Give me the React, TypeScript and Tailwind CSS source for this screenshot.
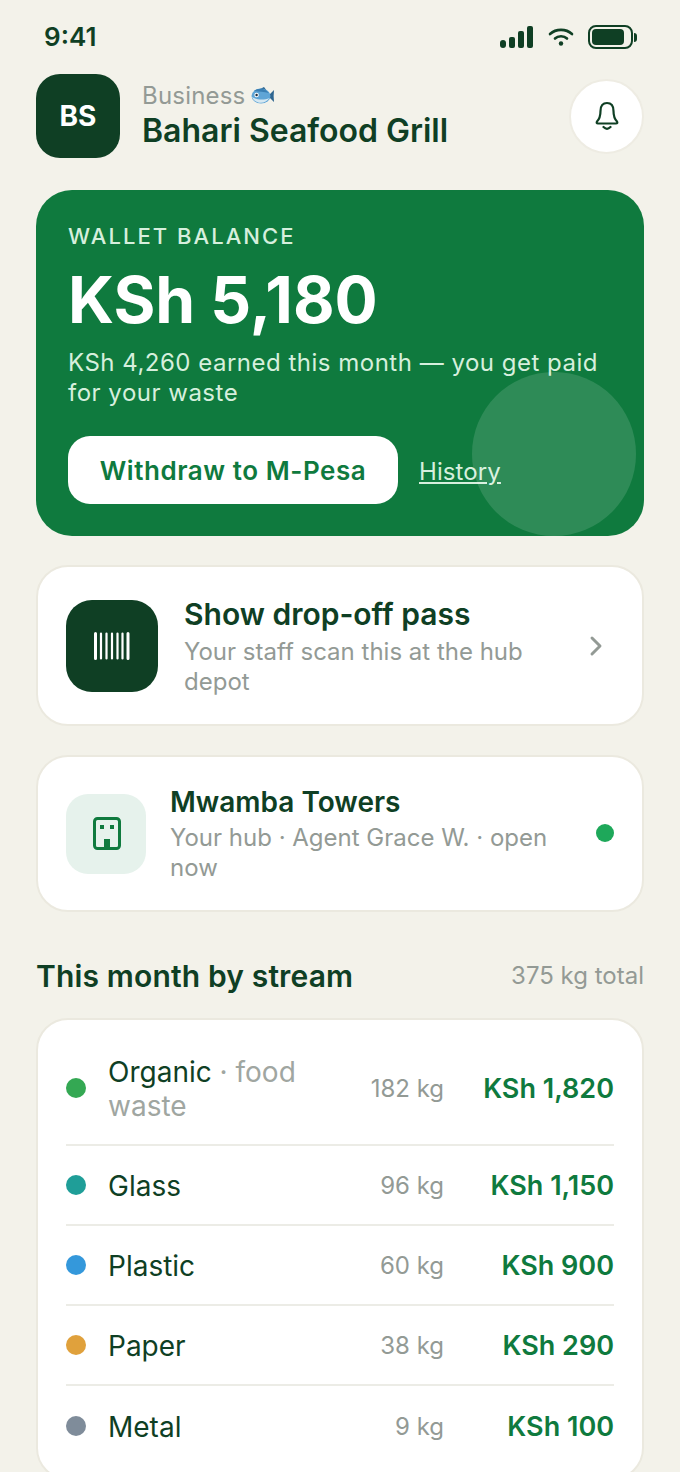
import { ChevronRight } from 'lucide-react';

const streams = [
  { name: 'Glass', kg: '96 kg', pay: 'KSh 1,150', dot: 'bg-[#1f9e98]' },
  { name: 'Plastic', kg: '60 kg', pay: 'KSh 900', dot: 'bg-[#3498db]' },
  { name: 'Paper', kg: '38 kg', pay: 'KSh 290', dot: 'bg-[#e0a13c]' },
  { name: 'Metal', kg: '9 kg', pay: 'KSh 100', dot: 'bg-[#7f8c9a]' },
];

const FishIcon = () => (
  <svg width="24" height="22" viewBox="0 0 24 22">
    <path d="M17 11 L23 5 C22.5 9 22.5 13 23 17 Z" fill="#2f6690" />
    <path d="M7 5 L13 2 L16 6 Z" fill="#2f6690" />
    <ellipse cx="10" cy="11" rx="9.5" ry="7.5" fill="#5fa5d6" />
    <path d="M3 6 C7 2.5 14 3 18 8 C13 6.5 8 7 3 6 Z" fill="#3a7fb3" />
    <path d="M1 12 C4 19 14 20 18.5 13 C13 15.5 6 15 1 12 Z" fill="#d5e8f2" />
    <circle cx="5.6" cy="10" r="2.2" fill="#fff" />
    <circle cx="5.6" cy="10" r="1.2" fill="#1c2c3a" />
  </svg>
);

const BellIcon = () => (
  <svg width="24" height="30" viewBox="0 0 24 30" fill="none" stroke="#0f3f24" strokeWidth="2.2" strokeLinecap="round" strokeLinejoin="round">
    <path d="M5.5 10 C5.5 4.5 8 2 12 2 S18.5 4.5 18.5 10 C18.5 15 19.5 18 22 20.5 Q23 22.5 21 22.5 H3 Q1 22.5 2 20.5 C4.5 18 5.5 15 5.5 10 Z" />
    <path d="M8.5 26 Q12 29.5 15.5 26" />
  </svg>
);

const StatusIcons = () => (
  <div className="flex items-center">
    <svg width="33" height="22" viewBox="0 0 33 22" fill="#0f3f24">
      <rect x="0" y="14" width="6" height="8" rx="3" />
      <rect x="9" y="11" width="6" height="11" rx="2" />
      <rect x="18" y="5" width="6" height="17" rx="2" />
      <rect x="27" y="0" width="6" height="22" rx="2" />
    </svg>
    <svg className="ml-[15px]" width="26" height="18" viewBox="0 0 26 18" fill="none" stroke="#0f3f24" strokeWidth="2.6" strokeLinecap="round">
      <path d="M2 6 C8 0.5 18 0.5 24 6" />
      <path d="M7 10.5 C10 7.5 16 7.5 19 10.5" />
      <circle cx="13" cy="15.5" r="2.2" fill="#0f3f24" stroke="none" />
    </svg>
    <div className="flex items-center ml-[14px]">
      <div className="w-[45px] h-[24px] rounded-[8px] border-2 border-[#0f3f24] pl-[2px] pr-[7px] py-[2px]">
        <div className="w-full h-full rounded-[4px] bg-[#0f3f24]" />
      </div>
      <div className="w-[3px] h-[9px] rounded-r-sm bg-[#0f3f24] ml-[1px]" />
    </div>
  </div>
);

export default function App() {
  return (
    <div className="w-[680px] h-[1472px] overflow-hidden bg-[#f3f2ea] font-['Inter',sans-serif] text-[#0f3f24]">
      {/* Status bar */}
      <div className="flex items-center justify-between h-[24px] mt-[25px] pl-[44px] pr-[43px] absolute w-[680px]">
        <span className="text-[26px] font-semibold -mt-[2px]">9:41</span>
        <StatusIcons />
      </div>

      <div className="px-[36px] pt-[74px]">
        {/* Header */}
        <div className="flex items-center">
          <div className="w-[84px] h-[84px] rounded-[24px] bg-[#0f3f24] flex items-center justify-center text-white text-[28px] font-bold">
            BS
          </div>
          <div className="ml-[22px] flex-1">
            <div className="flex items-center gap-[6px] text-[24px] leading-[30px] tracking-[0.2px] text-[#939a95]">
              Business <FishIcon />
            </div>
            <div className="text-[32px] leading-[40px] font-semibold">Bahari Seafood Grill</div>
          </div>
          <div className="w-[75px] h-[75px] rounded-full bg-white border-2 border-[#eeece3] flex items-center justify-center">
            <BellIcon />
          </div>
        </div>

        {/* Wallet */}
        <div className="relative overflow-hidden mt-[32px] h-[346px] rounded-[36px] bg-[#0f7a3e] px-[32px] pt-[32px]">
          <div className="text-[22px] leading-[28px] font-medium tracking-[2.05px] text-[#d6efdd]">WALLET BALANCE</div>
          <div className="mt-[16px] text-[64px] leading-[68px] font-bold text-white">KSh 5,180</div>
          <div className="mt-[14px] text-[24px] leading-[30px] tracking-[0.5px] text-[#d6efdd]">
            KSh 4,260 earned this month — you get paid for your waste
          </div>
          <div className="mt-[28px] flex items-center">
            <div className="h-[68px] w-[330px] rounded-[22px] bg-white flex items-center justify-center text-[26px] tracking-[0.55px] font-semibold text-[#0f7a3e]">
              Withdraw to M-Pesa
            </div>
            <span className="ml-[21px] mt-[4px] text-[24px] tracking-[0.1px] text-[#d6efdd] underline">History</span>
          </div>
          <div className="absolute right-[8px] bottom-0 w-[164px] h-[164px] rounded-full bg-white/[0.13]" />
        </div>

        {/* Drop-off pass */}
        <div className="mt-[29px] h-[161px] rounded-[32px] bg-white border-2 border-[#ebe9df] flex items-center pl-[28px] pr-[36px]">
          <div className="w-[92px] h-[92px] mt-[1px] rounded-[26px] bg-[#0f3f24] flex items-center justify-center shrink-0">
            <svg width="36" height="28" viewBox="0 0 36 28" stroke="#fff" strokeLinecap="round">
              <path strokeWidth="3" d="M1.5 1.5v25M34 1.5v25" />
              <path strokeWidth="2.2" d="M7 1.5v25M12.5 1.5v25M18 1.5v25M23.5 1.5v25M28.5 1.5v25" />
            </svg>
          </div>
          <div className="ml-[26px] flex-1 mt-[2px]">
            <div className="text-[30px] leading-[36px] font-semibold">Show drop-off pass</div>
            <div className="mt-[5px] text-[24px] leading-[30px] text-[#939a95]">
              Your staff scan this at the hub depot
            </div>
          </div>
          <ChevronRight size={32} strokeWidth={2.2} className="text-[#939a95] ml-[35px] -mr-[6px] mt-[1px] shrink-0" />
        </div>

        {/* Hub */}
        <div className="mt-[29px] h-[157px] rounded-[32px] bg-white border-2 border-[#ebe9df] flex items-center pl-[28px] pr-[28px]">
          <div className="w-[80px] h-[80px] rounded-[22px] bg-[#e6f2ec] flex items-center justify-center shrink-0">
            <svg className="ml-[2px]" width="28" height="33" viewBox="0 0 28 33" fill="none">
              <rect x="1.5" y="1.5" width="25" height="30" rx="3" stroke="#0f7a3e" strokeWidth="3" />
              <rect x="7" y="8" width="4" height="4" fill="#0f7a3e" />
              <rect x="17" y="8" width="4" height="4" fill="#0f7a3e" />
              <rect x="11" y="22" width="6" height="10" fill="#0f7a3e" />
            </svg>
          </div>
          <div className="ml-[24px] flex-1 mt-[2px]">
            <div className="text-[28px] leading-[36px] font-semibold -mt-[2px]">Mwamba Towers</div>
            <div className="mt-[3px] text-[24px] leading-[30px] text-[#939a95]">
              Your hub · Agent Grace W. · open now
            </div>
          </div>
          <div className="w-[18px] h-[18px] rounded-full bg-[#1ea85a] ml-[40px] mb-[2px] shrink-0" />
        </div>

        {/* Stream heading */}
        <div className="mt-[46px] flex items-center justify-between">
          <div className="text-[30px] leading-[36px] tracking-[0.15px] font-semibold">This month by stream</div>
          <div className="text-[24px] text-[#939a95]">375 kg total</div>
        </div>

        {/* Stream list */}
        <div className="mt-[24px] rounded-[32px] bg-white border-2 border-[#ebe9df] px-[28px] py-[12px]">
          <div className="flex items-center h-[114px] border-b-2 border-[#ecece6]">
            <div className="w-[20px] h-[20px] rounded-full bg-[#34a853] shrink-0" />
            <div className="ml-[22px] mt-[1px] w-[240px] text-[28px] leading-[34px]">
              Organic <span className="text-[#a0a6a1]">· food waste</span>
            </div>
            <div className="flex-1 mt-[2px] text-right text-[24px] text-[#939a95]">182 kg</div>
            <div className="w-[170px] mt-[2px] text-right text-[27px] font-semibold text-[#0f7a3e]">KSh 1,820</div>
          </div>
          {streams.map((s, i) => (
            <div key={s.name} className={`flex items-center h-[80px] ${i < 3 ? 'border-b-2 border-[#ecece6]' : ''}`}>
              <div className={`w-[20px] h-[20px] rounded-full shrink-0 ${s.dot}`} />
              <div className="ml-[22px] mt-[2px] w-[240px] text-[28px] leading-[34px]">{s.name}</div>
              <div className="flex-1 mt-[2px] text-right text-[24px] text-[#939a95]">{s.kg}</div>
              <div className="w-[170px] mt-[2px] text-right text-[27px] font-semibold text-[#0f7a3e]">{s.pay}</div>
            </div>
          ))}
        </div>
      </div>
    </div>
  );
}
